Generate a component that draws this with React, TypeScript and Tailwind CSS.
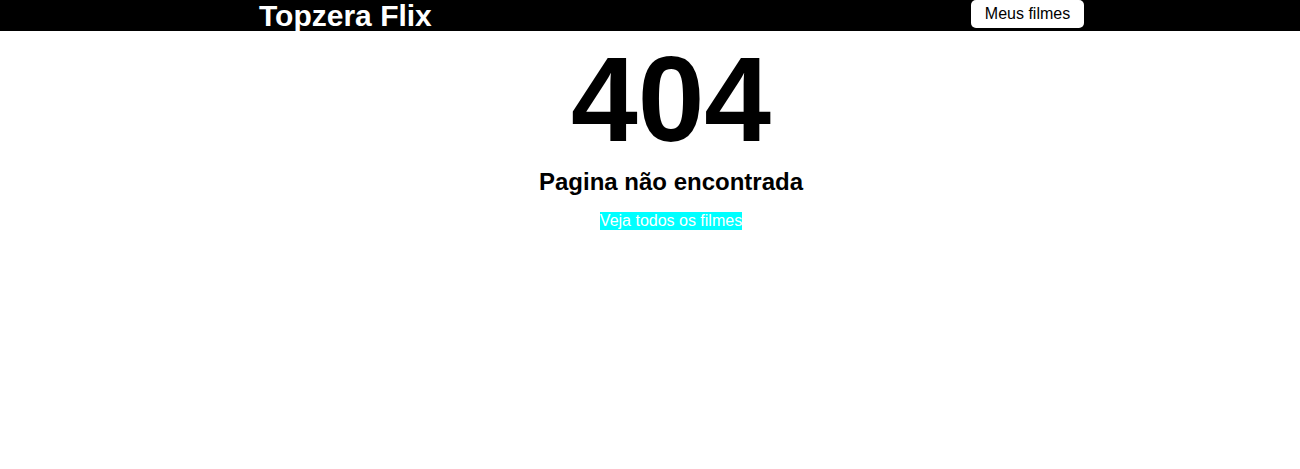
export default function App() {
  return (
    <div className="min-h-screen bg-white font-['Liberation_Sans',Arial,sans-serif]">
      <header className="flex h-[31px] items-center justify-between bg-black pl-[259px] pr-[216px]">
        <a href="#" className="text-[30px] font-bold leading-none text-white">
          Topzera Flix
        </a>
        <a
          href="#"
          className="-mt-[3px] flex h-[28px] w-[113px] items-center justify-center rounded-[5px] bg-white text-[16px] text-black"
        >
          Meus filmes
        </a>
      </header>

      <main className="flex flex-col items-center pl-[42px] text-black">
        <h1 className="mt-[8px] text-[120px] font-bold leading-none">404</h1>
        <h2 className="mt-[5px] text-[24px] font-bold">Pagina não encontrada</h2>
        <a href="#" className="mt-[12px] bg-[#00ffff] text-[16px] leading-[18px] text-white">
          Veja todos os filmes
        </a>
      </main>
    </div>
  );
}
